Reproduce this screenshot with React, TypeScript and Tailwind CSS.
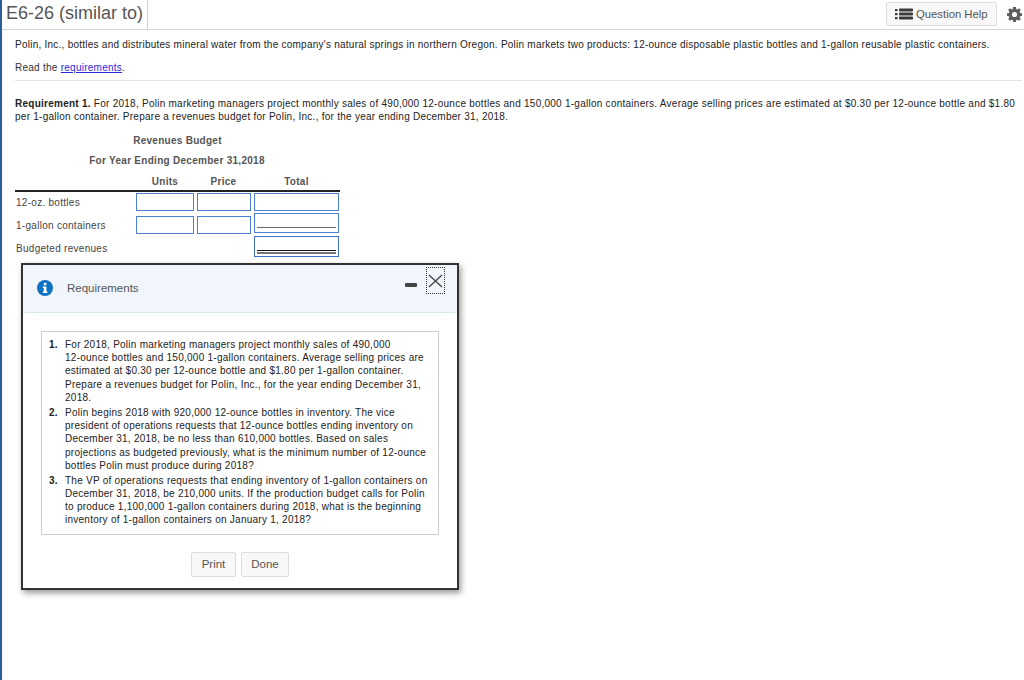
import React from "react";

function HelpIcon() {
  return (
    <svg width="18" height="12" viewBox="0 0 18 12" className="mr-[3px] shrink-0">
      <g fill="#3a3a3a">
        <rect x="0" y="1" width="2.5" height="2.2" />
        <rect x="0" y="5" width="2.5" height="2.2" />
        <rect x="0" y="9" width="2.5" height="2.2" />
        <rect x="4" y="0.5" width="14" height="3" rx="0.8" />
        <rect x="4" y="4.5" width="14" height="3" rx="0.8" />
        <rect x="4" y="8.5" width="14" height="3" rx="0.8" />
      </g>
    </svg>
  );
}

function Gear() {
  return (
    <svg width="15" height="15" viewBox="0 0 14 14">
      <path fill="#5f5f5f" fillRule="evenodd" d="M5.700 0h2.600l.3 1.900 1 .4 1.600-1.100 1.700 1.700-1.100 1.600.4 1 1.800.3v2.500l-1.800.3-.4 1 1.100 1.600-1.700 1.700-1.600-1.100-1 .4-.3 1.900H5.700l-.3-1.900-1-.4-1.600 1.100-1.700-1.700 1.100-1.600-.4-1L0 8.300V5.800l1.800-.3.4-1-1.100-1.600 1.700-1.700 1.600 1.100 1-.4zM7 4.600a2.400 2.400 0 1 0 0 4.800 2.400 2.400 0 0 0 0-4.800z" />
    </svg>
  );
}

function Label({ children, cls }: { children: React.ReactNode; cls: string }) {
  return <div className={`w-[121px] pl-[1px] text-[#444] ${cls}`}>{children}</div>;
}

const items = [
  [
    "For 2018, Polin marketing managers project monthly sales of 490,000",
    "12-ounce bottles and 150,000 1-gallon containers. Average selling prices are",
    "estimated at $0.30 per 12-ounce bottle and $1.80 per 1-gallon container.",
    "Prepare a revenues budget for Polin, Inc., for the year ending December 31,",
    "2018.",
  ],
  [
    "Polin begins 2018 with 920,000 12-ounce bottles in inventory. The vice",
    "president of operations requests that 12-ounce bottles ending inventory on",
    "December 31, 2018, be no less than 610,000 bottles. Based on sales",
    "projections as budgeted previously, what is the minimum number of 12-ounce",
    "bottles Polin must produce during 2018?",
  ],
  [
    "The VP of operations requests that ending inventory of 1-gallon containers on",
    "December 31, 2018, be 210,000 units. If the production budget calls for Polin",
    "to produce 1,100,000 1-gallon containers during 2018, what is the beginning",
    "inventory of 1-gallon containers on January 1, 2018?",
  ],
];

const cell = "h-[18px] border border-[#4a7fd0] bg-white";

export default function App() {
  return (
    <div className="relative w-[1024px] h-[680px] overflow-hidden bg-white border-l-2 border-[#2a5f95] font-['Liberation_Sans',Arial,sans-serif] text-[10px] leading-[13px] text-[#222]">
      <header className="flex items-stretch h-[30px] border-b border-[#d5d5de]">
        <div className="w-[146px] border-r border-[#d0d0d0] pl-[4px] text-[18px] leading-[27px] text-[#555] whitespace-nowrap">E6-26 (similar to)</div>
        <div className="flex-1 flex justify-end items-start pt-[2px] pr-[2px]">
          <button className="flex items-center h-[24px] w-[111px] pl-[8px] border border-[#ddd] rounded-[2px] bg-[#f8f8f8] text-[11.3px] text-[#555] whitespace-nowrap">
            <HelpIcon />
            Question Help
          </button>
          <div className="ml-[10px] mt-[5px] h-[15px]"><Gear /></div>
        </div>
      </header>

      <main className="pl-[13px]">
        <p className="mt-[8px] tracking-[0.245px] whitespace-nowrap">Polin, Inc., bottles and distributes mineral water from the company's natural springs in northern Oregon. Polin markets two products: 12-ounce disposable plastic bottles and 1-gallon reusable plastic containers.</p>
        <p className="mt-[10px] tracking-[0.255px] text-[#333]">Read the <span className="text-[#2a2ad8] underline">requirements</span>.</p>
        <div className="mt-[6px] mr-[2px] border-t border-[#dde3ea]" />
        <p className="mt-[16px] tracking-[0.255px] whitespace-nowrap"><b>Requirement 1.</b> For 2018, Polin marketing managers project monthly sales of 490,000 12-ounce bottles and 150,000 1-gallon containers. Average selling prices are estimated at $0.30 per 12-ounce bottle and $1.80<br />per 1-gallon container. Prepare a revenues budget for Polin, Inc., for the year ending December 31, 2018.</p>

        <section className="w-[325px] mt-[11px] tracking-[0.28px]">
          <div className="text-center font-bold text-[#555]">
            <div className="h-[18px] leading-[14px]">Revenues Budget</div>
            <div className="h-[22px] leading-[18px] -ml-[1px]">For Year Ending December 31,2018</div>
          </div>
          <div className="flex h-[15px] font-bold text-[#555] leading-[16px]">
            <div className="w-[121px]" />
            <div className="w-[58px] text-center">Units</div>
            <div className="w-[53px] ml-[3px] text-center">Price</div>
            <div className="w-[85px] ml-[4px] text-center">Total</div>
          </div>
          <div className="mt-[1px] border-t-2 border-[#222]" />
          <div className="flex items-start mt-[1px]">
            <Label cls="leading-[20px]">12-oz. bottles</Label>
            <div className={`${cell} w-[58px]`} />
            <div className={`${cell} w-[54px] ml-[3px]`} />
            <div className={`${cell} w-[85px] ml-[3px]`} />
          </div>
          <div className="flex items-start mt-[3px]">
            <Label cls="leading-[20px]">1-gallon containers</Label>
            <div className={`${cell} w-[58px]`} />
            <div className={`${cell} w-[54px] ml-[3px]`} />
            <div className="w-[85px] ml-[3px] h-[20px] -mt-[3px] border border-[#4a7fd0] pt-[13px] px-[2px]">
              <div className="border-t border-[#666]" />
            </div>
          </div>
          <div className="flex items-start">
            <Label cls="leading-[26px]">Budgeted revenues</Label>
            <div className="ml-[118px] w-[85px] h-[21px] border border-[#3f75c8] pt-[13px] px-[2px]">
              <div className="border-t border-[#111] h-[4px] border-b-2 border-b-[#777]" />
            </div>
          </div>
        </section>
      </main>

      <div className="absolute left-[19px] top-[263px] w-[438px] h-[327px] bg-white border-2 border-[#333] shadow-[2px_3px_6px_rgba(0,0,0,0.4)] flex flex-col">
        <div className="relative h-[48px] bg-[#f1f6fd] border-b border-[#d8e6f0] flex items-center">
          <svg width="16" height="16" viewBox="0 0 16 16" className="ml-[14px] mb-[1px]">
            <circle cx="8" cy="8" r="8" fill="#0d72c4" />
            <rect x="6.800" y="2.800" width="2.600" height="2.400" fill="#fff" />
            <path d="M5.800 6.500h3.600v5h1v1.500H5.800v-1.500h1v-3.500h-1z" fill="#fff" />
          </svg>
          <div className="ml-[14px] text-[11.500px] text-[#555]">Requirements</div>
          <div className="absolute left-[382px] top-[18px] w-[12px] h-[4px] bg-[#444] rounded-[1px]" />
          <div className="absolute left-[403px] top-[2px] w-[19px] h-[27px] border border-dotted border-[#333] flex items-center justify-center">
            <svg width="15" height="14" viewBox="0 0 15 14" className="mt-[1px]"><path d="M1 1l13 12M14 1L1 13" stroke="#444" strokeWidth="1.300" fill="none" /></svg>
          </div>
        </div>
        <div className="mx-[18px] mt-[18px] h-[204px] border border-[#ccc] pl-[7px] pt-[6px]">
          <ol className="tracking-[0.255px]">
            {items.map((lines, i) => (
              <li key={i} className="flex mb-[2px]">
                <b className="w-[16px] shrink-0">{i + 1}.</b>
                <div className="whitespace-nowrap">
                  {lines.map((l) => <div key={l} className="h-[13.200px]">{l}</div>)}
                </div>
              </li>
            ))}
          </ol>
        </div>
        <div className="flex gap-[5px] mt-[17px] ml-[168px] text-[11.500px] text-[#555]">
          <button className="w-[45px] h-[25px] border border-[#ddd] rounded-[2px] bg-[#f8f8f8]">Print</button>
          <button className="w-[48px] h-[25px] border border-[#ddd] rounded-[2px] bg-[#f8f8f8]">Done</button>
        </div>
      </div>
    </div>
  );
}
